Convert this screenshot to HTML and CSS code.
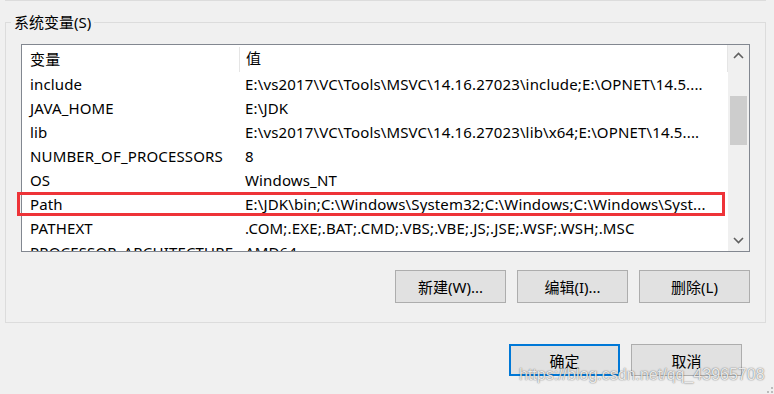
FILE: index.html
```html
<!DOCTYPE html>
<html lang="zh-CN">
<head>
    <meta charset="UTF-8">
    <title>环境变量</title>
    <link rel="stylesheet" href="styles.css">
</head>
<body>
    <div class="group-prev"></div>

    <div class="group">
        <div class="group-title">系统变量(S)</div>

        <div class="listview">
            <div class="list-body">
                <div class="list-head">
                    <div class="col-name">变量</div>
                    <div class="col-value">值</div>
                </div>
                <div class="list-row"><div class="col-name">include</div><div class="col-value">E:\vs2017\VC\Tools\MSVC\14.16.27023\include;E:\OPNET\14.5....</div></div>
                <div class="list-row"><div class="col-name">JAVA_HOME</div><div class="col-value">E:\JDK</div></div>
                <div class="list-row"><div class="col-name">lib</div><div class="col-value">E:\vs2017\VC\Tools\MSVC\14.16.27023\lib\x64;E:\OPNET\14.5....</div></div>
                <div class="list-row"><div class="col-name">NUMBER_OF_PROCESSORS</div><div class="col-value">8</div></div>
                <div class="list-row"><div class="col-name">OS</div><div class="col-value">Windows_NT</div></div>
                <div class="list-row"><div class="col-name">Path</div><div class="col-value">E:\JDK\bin;C:\Windows\System32;C:\Windows;C:\Windows\Syst...</div></div>
                <div class="list-row"><div class="col-name">PATHEXT</div><div class="col-value">.COM;.EXE;.BAT;.CMD;.VBS;.VBE;.JS;.JSE;.WSF;.WSH;.MSC</div></div>
                <div class="list-row"><div class="col-name">PROCESSOR_ARCHITECTURE</div><div class="col-value">AMD64</div></div>
            </div>
            <div class="scrollbar">
                <div class="scroll-btn">
                    <svg width="11" height="7" viewBox="0 0 11 7"><path d="M1 6 L5.5 1.5 L10 6" fill="none" stroke="#606060" stroke-width="1.6"/></svg>
                </div>
                <div class="scroll-track">
                    <div class="scroll-thumb"></div>
                </div>
                <div class="scroll-btn">
                    <svg width="11" height="7" viewBox="0 0 11 7"><path d="M1 1 L5.5 5.5 L10 1" fill="none" stroke="#606060" stroke-width="1.6"/></svg>
                </div>
            </div>
            <div class="mark"></div>
        </div>

        <div class="button-row">
            <button class="button">新建(W)...</button>
            <button class="button">编辑(I)...</button>
            <button class="button">删除(L)</button>
        </div>
    </div>

    <div class="dialog-buttons">
        <button class="button default">确定</button>
        <button class="button">取消</button>
    </div>

    <div class="watermark">https://blog.csdn.net/qq_43965708</div>
    <svg class="grip" width="6" height="6" viewBox="0 0 6 6">
        <rect x="4" y="0" width="2" height="2" fill="#bcbcbc"/>
        <rect x="0" y="4" width="2" height="2" fill="#bcbcbc"/>
        <rect x="4" y="4" width="2" height="2" fill="#bcbcbc"/>
    </svg>
</body>
</html>
```

FILE: styles.css
```css
body {
    margin: 0;
    width: 774px;
    height: 394px;
    overflow: hidden;
    position: relative;
    background: #f0f0f0;
    font-family: "Noto Sans", "Noto Sans CJK SC", sans-serif;
    font-size: 15px;
    color: #000;
}

.group-prev {
    margin: 0 8px 0 5px;
    border-bottom: 1px solid #dcdcdc;
}

.group {
    margin: 21px 8px 0 5px;
    border: 1px solid #dcdcdc;
    padding: 0 15px 19px 15px;
}

.group-title {
    display: block;
    width: fit-content;
    margin: -11px 0 0 -10px;
    padding: 0 3px;
    height: 20px;
    line-height: 20px;
    background: #f0f0f0;
}

.listview {
    position: relative;
    display: flex;
    margin-top: 12px;
    height: 206px;
    border: 1px solid #828790;
    background: #fff;
}

.list-body {
    flex: 1;
    overflow: hidden;
    letter-spacing: 0.15px;
}

.list-head, .list-row {
    display: flex;
    white-space: nowrap;
}

.list-head {
    height: 27px;
    line-height: 27px;
}

.list-row {
    height: 24px;
    line-height: 24px;
}

.col-name {
    width: 209px;
    padding-left: 8px;
    flex: none;
    overflow: hidden;
}

.col-value {
    padding-left: 6px;
    flex: 1;
    overflow: hidden;
}

.list-head .col-name {
    margin-top: 2px;
    line-height: 25px;
    border-right: 1px solid #e5e5e5;
}

.list-head .col-value {
    border-right: 1px solid #e5e5e5;
}

.scrollbar {
    width: 21px;
    flex: none;
    display: flex;
    flex-direction: column;
    background: #f0f0f0;
}

.scroll-btn {
    height: 21px;
    display: flex;
    align-items: center;
    justify-content: center;
}

.scroll-track {
    flex: 1;
    padding-top: 30px;
}

.scroll-thumb {
    height: 49px;
    margin: 0 2px;
    background: #cdcdcd;
}

.mark {
    position: absolute;
    left: -5px;
    top: 147px;
    width: 702px;
    height: 18px;
    border: 3px solid #ee3338;
}

.button-row {
    display: flex;
    justify-content: flex-end;
    gap: 11px;
    margin-top: 18px;
}

.button {
    width: 111px;
    height: 33px;
    padding: 0;
    background: #e1e1e1;
    border: 1px solid #adadad;
    font-family: "Noto Sans", "Noto Sans CJK SC", sans-serif;
    font-size: 15px;
    color: #000;
}

.dialog-buttons {
    display: flex;
    justify-content: flex-end;
    gap: 11px;
    margin-top: 21px;
    padding-right: 32px;
}

.dialog-buttons .button {
    height: 32px;
}

.button.default {
    border: 2px solid #0078d7;
}

.watermark {
    position: absolute;
    left: 519px;
    top: 366px;
    font-family: "Liberation Sans", Arial, sans-serif;
    font-size: 16px;
    color: rgba(255, 255, 255, 0.85);
    text-shadow: 0 0 1px rgba(0, 0, 0, 0.5), 0 0 2px rgba(0, 0, 0, 0.25);
}

.grip {
    position: absolute;
    right: 1px;
    bottom: 1px;
}
```
